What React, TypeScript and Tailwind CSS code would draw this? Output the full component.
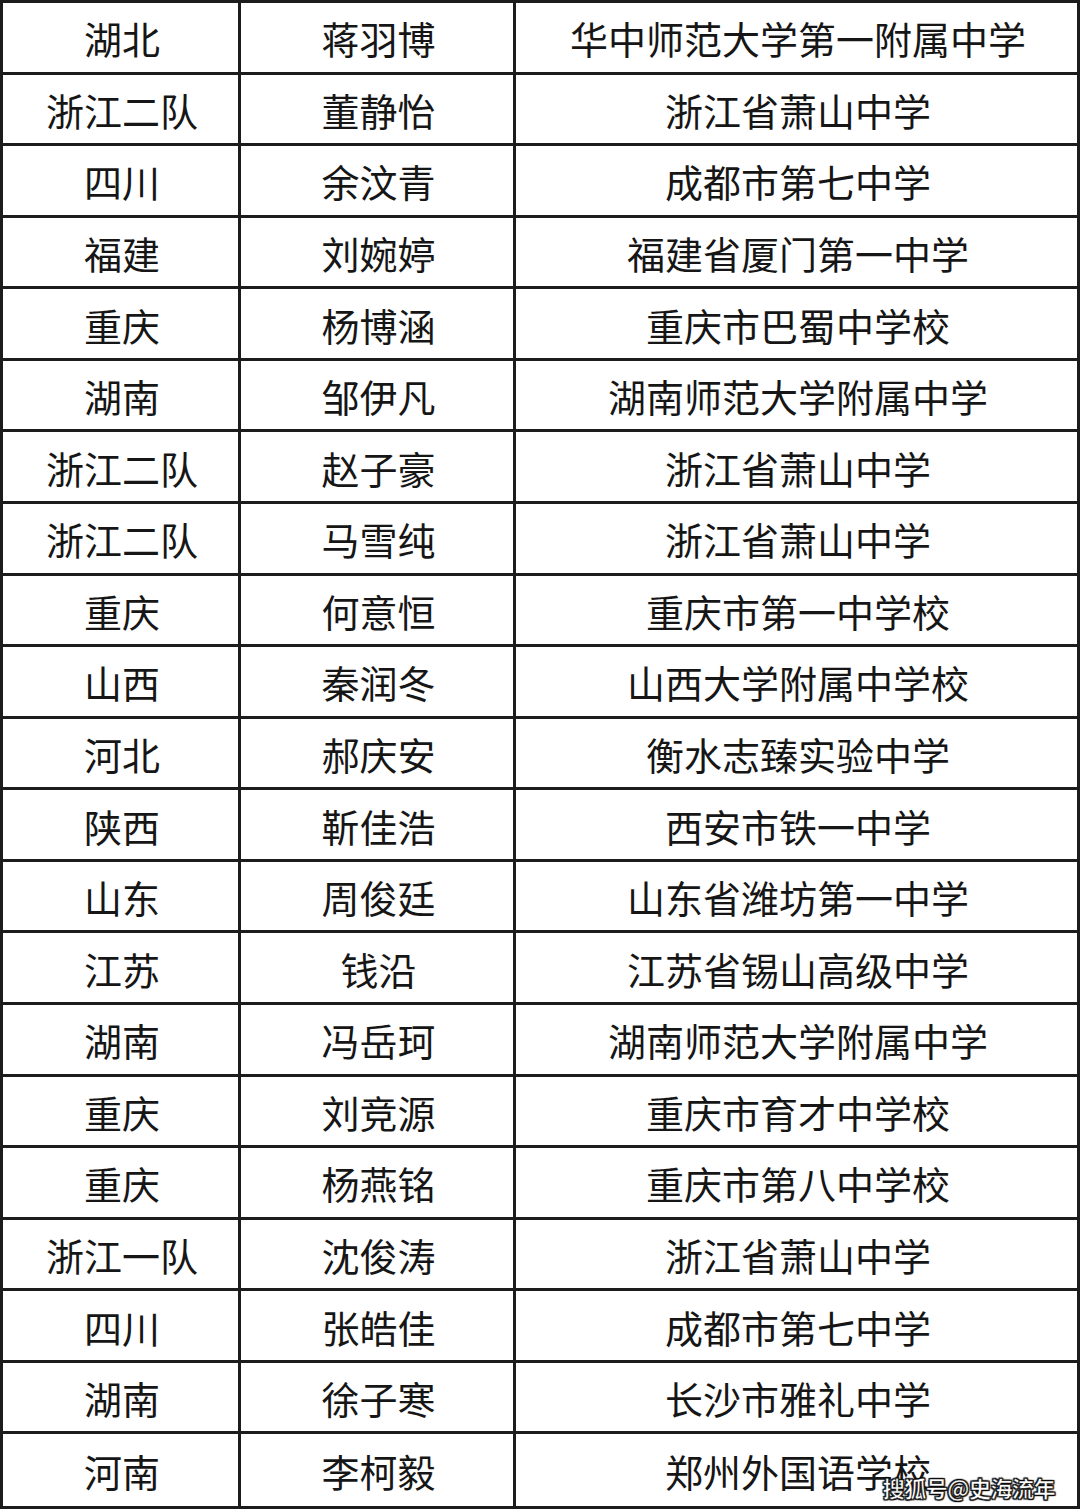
import React from "react";

const rows: [string, string, string][] = [
  ["湖北", "蒋羽博", "华中师范大学第一附属中学"],
  ["浙江二队", "董静怡", "浙江省萧山中学"],
  ["四川", "余汶青", "成都市第七中学"],
  ["福建", "刘婉婷", "福建省厦门第一中学"],
  ["重庆", "杨博涵", "重庆市巴蜀中学校"],
  ["湖南", "邹伊凡", "湖南师范大学附属中学"],
  ["浙江二队", "赵子豪", "浙江省萧山中学"],
  ["浙江二队", "马雪纯", "浙江省萧山中学"],
  ["重庆", "何意恒", "重庆市第一中学校"],
  ["山西", "秦润冬", "山西大学附属中学校"],
  ["河北", "郝庆安", "衡水志臻实验中学"],
  ["陕西", "靳佳浩", "西安市铁一中学"],
  ["山东", "周俊廷", "山东省潍坊第一中学"],
  ["江苏", "钱沿", "江苏省锡山高级中学"],
  ["湖南", "冯岳珂", "湖南师范大学附属中学"],
  ["重庆", "刘竞源", "重庆市育才中学校"],
  ["重庆", "杨燕铭", "重庆市第八中学校"],
  ["浙江一队", "沈俊涛", "浙江省萧山中学"],
  ["四川", "张皓佳", "成都市第七中学"],
  ["湖南", "徐子寒", "长沙市雅礼中学"],
  ["河南", "李柯毅", "郑州外国语学校"],
];

export default function App() {
  return (
    <div
      className="relative w-[1080px] h-[1509px] bg-white border-[3px] border-[#1c1c1c] overflow-hidden"
      style={{ fontFamily: '"Noto Sans CJK SC", "Noto Sans", sans-serif' }}
    >
      <div className="grid grid-cols-[238px_275px_1fr] grid-rows-21 w-full h-full">
        {rows.map((r, i) =>
          r.map((c, j) => (
            <div
              key={`${i}-${j}`}
              className={
                "flex items-center justify-center pl-[3px] text-[38px] leading-none text-[#161616] whitespace-nowrap border-[#1c1c1c] " +
                (j < 2 ? "border-r-[3px] " : "") +
                (i < rows.length - 1 ? "border-b-[3px]" : "")
              }
            >
              <span className="translate-y-[1px]">{c}</span>
            </div>
          ))
        )}
      </div>
      <div
        className="absolute right-[22px] bottom-[8px] text-[22px] leading-none font-bold text-white tracking-[-0.5px]"
        style={{
          WebkitTextStroke: "0.6px #222",
          textShadow: "1px 1px 1px #000, -1px -1px 1px #000, 1px -1px 1px #000, -1px 1px 1px #000",
        }}
      >
        搜狐号@史海流年
      </div>
    </div>
  );
}
